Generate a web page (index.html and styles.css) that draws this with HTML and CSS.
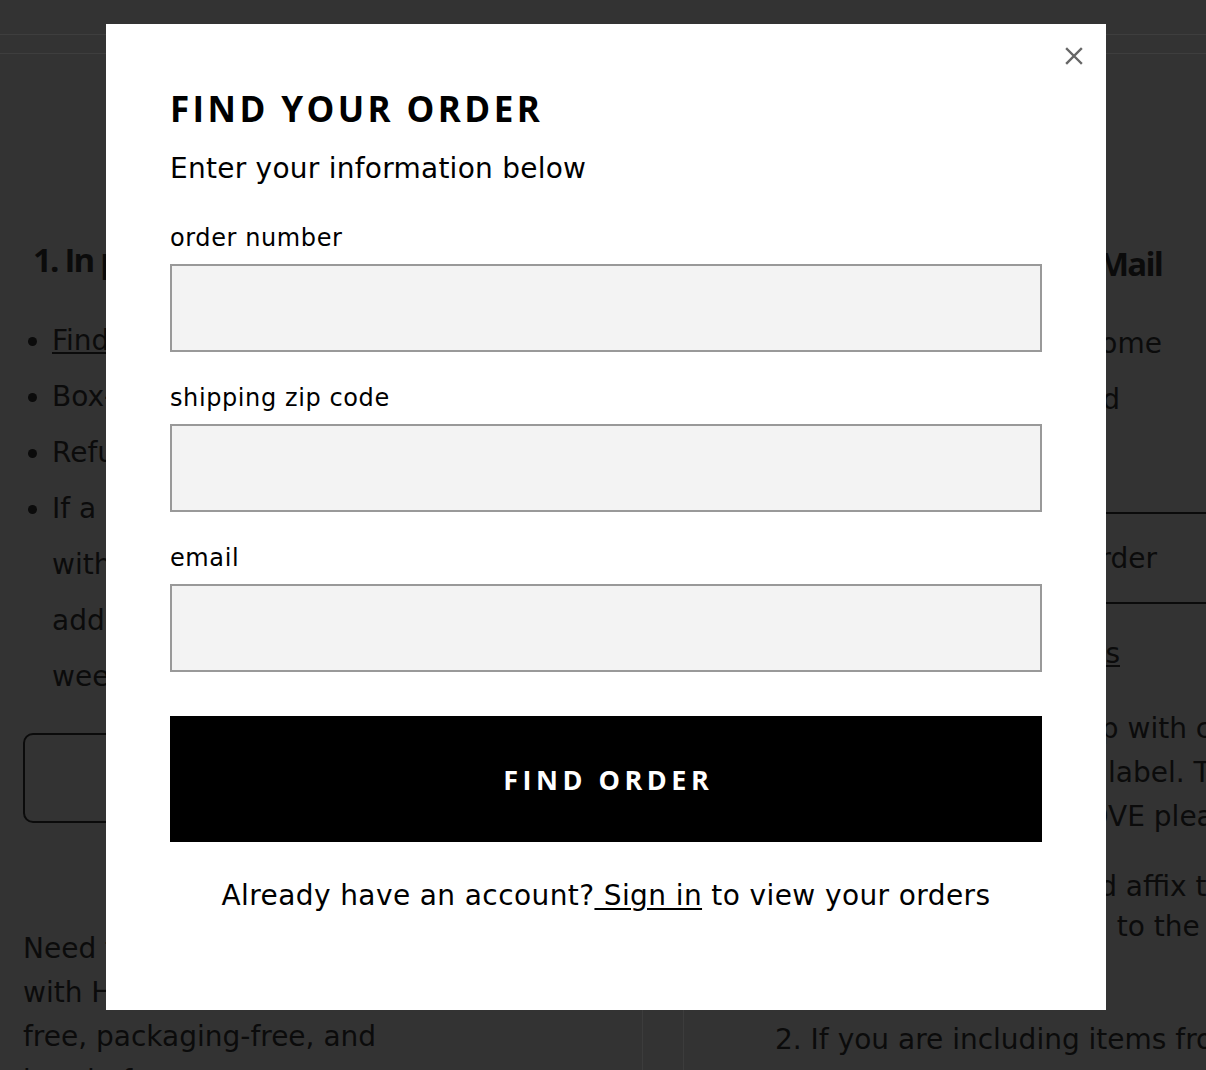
FILE: index.html
```html
<!DOCTYPE html>
<html lang="en">
<head>
<meta charset="utf-8">
<title>Returns – Find your order</title>
<link rel="stylesheet" href="styles.css">
</head>
<body>
<div class="page">
  <header class="topbar"></header>
  <nav class="subbar"></nav>
  <main class="returns">
    <section class="col-left">
      <h3 class="method-title">1. In person</h3>
      <ul class="method-list">
        <li><a href="#">Find a store near you</a></li>
        <li>Box-free returns at any store</li>
        <li>Refunds issued to original payment</li>
        <li>If a return is made in store<br>with a gift receipt, credit will be<br>added to your account within two<br>weeks</li>
      </ul>
      <a class="outline-btn" href="#">Find a store</a>
      <p class="help">Need to return something? Drop<br>with Happy Returns for a box-<br>free, packaging-free, and<br>hassle-free return.</p>
    </section>
    <div class="gutter"></div>
    <section class="col-right">
      <h3 class="method-title ra">2. Ship by Mail</h3>
      <p class="mail-intro"><span class="line ra">Ship it back from home</span><span class="line ra end-1120">for a full refund</span></p>
      <div class="start-row"><span class="ra end-1157">Start a mail-in order</span></div>
      <p class="steps-link ra end-1120"><a href="#">View mail-in instructions</a></p>
      <p class="step-a"><span class="line ov">Pack it and seal it up with care, and</span><span class="line ov">attach your prepaid label. Tape this.</span><span class="line ov">it securely. If you LOVE please note:</span></p>
      <p class="step-b"><span class="line ov">Print the label and affix the label.</span><span class="line ov">to the top of it.</span></p>
      <p class="step-c">2. If you are including items from</p>
    </section>
  </main>
</div>

<div class="backdrop">
  <div class="modal" role="dialog" aria-labelledby="find-title">
    <button class="close" type="button" aria-label="Close">
      <svg viewBox="0 0 18 18" width="18" height="18" aria-hidden="true"><path d="M2 2 L16 16 M16 2 L2 16" fill="none" stroke="#666" stroke-width="2.4" stroke-linecap="square"/></svg>
    </button>
    <h2 id="find-title" class="title">FIND YOUR ORDER</h2>
    <p class="subtitle">Enter your information below</p>
    <form class="find-form">
      <div class="field">
        <label for="order">order number</label>
        <input id="order" type="text">
      </div>
      <div class="field">
        <label for="zip">shipping zip code</label>
        <input id="zip" type="text">
      </div>
      <div class="field">
        <label for="email">email</label>
        <input id="email" type="email">
      </div>
      <button class="submit" type="button">FIND ORDER</button>
    </form>
    <p class="account">Already have an account?<a href="#"> Sign in</a> to view your orders</p>
  </div>
</div>
</body>
</html>
```

FILE: styles.css
```css
html, body {
  margin: 0;
  padding: 0;
  height: 100%;
  overflow: hidden;
}

body {
  background: #333333;
  color: #0b0b0b;
  font-family: "DejaVu Sans", "Noto Sans", sans-serif;
}

/* ---------- background page (dimmed) ---------- */
.topbar {
  height: 34px;
  border-bottom: 1px solid #3e3e3e;
}

.subbar {
  height: 18px;
  border-bottom: 1px solid #3e3e3e;
}

.returns {
  display: grid;
  grid-template-columns: 619px 42px 478px;
  padding-left: 23px;
}

.col-left {
  font-size: 28px;
}

.gutter {
  border-left: 1px solid #3c3c3c;
  border-right: 1px solid #3c3c3c;
}

.method-title {
  margin: 186px 0 0;
  padding-left: 10px;
  font-family: "Open Sans", "DejaVu Sans", sans-serif;
  font-size: 33px;
  line-height: 40px;
  font-weight: 700;
  letter-spacing: -1.8px;
  white-space: nowrap;
}

.method-list {
  margin: 33px 0 0;
  padding-left: 29px;
  line-height: 56px;
  white-space: nowrap;
}

.method-list a,
.col-right a {
  color: inherit;
}

.outline-btn {
  display: block;
  margin-top: 28px;
  height: 90px;
  box-sizing: border-box;
  border: 2px solid #0b0b0b;
  border-radius: 10px;
  color: inherit;
  text-decoration: none;
  text-align: center;
  line-height: 86px;
}

.help {
  margin: 104px 0 0;
  line-height: 44px;
  white-space: nowrap;
}

.col-right {
  padding-left: 91px;
  font-size: 28px;
  white-space: nowrap;
}

.col-right .method-title {
  margin-top: 190px;
  padding-left: 0;
}

.line {
  display: block;
}

.ra {
  text-align: right;
}

.end-1120 {
  padding-right: 42px;
}

.end-1157 {
  padding-right: 5px;
}

.ov {
  text-align: right;
  margin-right: -165px;
}

.mail-intro {
  margin: 32px 0 0;
  line-height: 56px;
}

.start-row {
  margin: 84px -200px 0 0;
  padding-right: 200px;
  height: 88px;
  border-top: 2px solid #0b0b0b;
  border-bottom: 2px solid #0b0b0b;
  display: flex;
  align-items: center;
  justify-content: flex-end;
}

.start-row span {
  display: block;
}

.steps-link {
  margin: 28px 0 0;
  line-height: 44px;
}

.step-a {
  margin: 31px 0 0;
  line-height: 44px;
}

.step-b {
  margin: 28px 0 0;
  line-height: 40px;
}

.step-c {
  margin: 71px 0 0;
  line-height: 44px;
}

/* ---------- modal ---------- */
.backdrop {
  position: fixed;
  inset: 0;
}

.modal {
  position: relative;
  box-sizing: border-box;
  width: 1000px;
  height: 986px;
  margin: 24px 0 0 106px;
  padding: 65px 64px 0;
  background: #ffffff;
  color: #000000;
}

.close {
  position: absolute;
  top: 23px;
  left: 959px;
  width: 18px;
  height: 18px;
  padding: 0;
  border: 0;
  background: none;
  cursor: pointer;
}

.close svg {
  display: block;
}

.title {
  margin: 0;
  font-family: "Open Sans", "DejaVu Sans", sans-serif;
  font-weight: 700;
  font-size: 35px;
  line-height: 40px;
  letter-spacing: 3.4px;
}

.subtitle {
  margin: 22px 0 0;
  font-size: 28px;
  line-height: 36px;
  letter-spacing: 0.25px;
}

.find-form {
  margin-top: 35px;
}

.field label {
  display: block;
  margin-bottom: 10px;
  font-size: 24px;
  line-height: 32px;
  letter-spacing: 0.6px;
}

.field input {
  display: block;
  box-sizing: border-box;
  width: 100%;
  height: 88px;
  margin: 0;
  border: 2px solid #999999;
  background: #f3f3f3;
  font: inherit;
}

.field + .field {
  margin-top: 30px;
}

.submit {
  display: block;
  width: 100%;
  height: 126px;
  margin-top: 44px;
  padding: 0 0 0 4.5px;
  border: 0;
  background: #000000;
  color: #ffffff;
  font-family: "Open Sans", "DejaVu Sans", sans-serif;
  font-weight: 700;
  font-size: 27px;
  letter-spacing: 4.5px;
  cursor: pointer;
}

.account {
  margin: 36px 0 0;
  text-align: center;
  font-size: 28px;
  line-height: 36px;
  letter-spacing: 0.4px;
}

.account a {
  color: #000000;
  text-decoration: underline;
  text-underline-offset: 3px;
}
```
